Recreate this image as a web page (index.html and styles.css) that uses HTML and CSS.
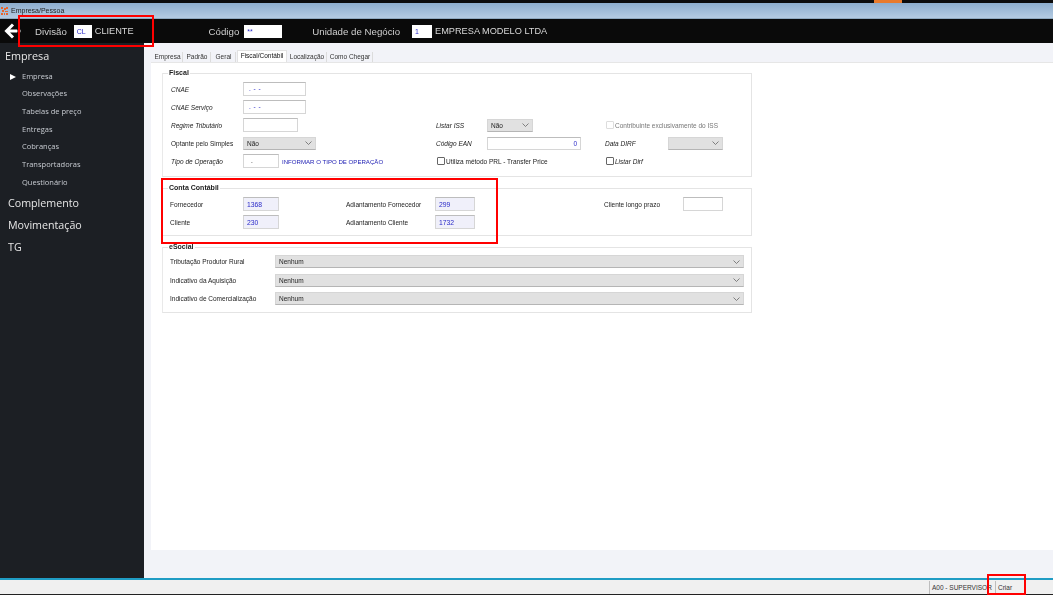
FILE: index.html
```html
<!DOCTYPE html>
<html lang="pt-BR">
<head>
<meta charset="utf-8">
<title>Empresa/Pessoa</title>
<link rel="stylesheet" href="styles.css">
</head>
<body>
<div class="app">
  <div class="strip"><span class="strip-mark"></span></div>
  <div class="titlebar">
    <svg class="app-icon" width="7" height="8" viewBox="0 0 7 8"><path d="M0 0h2v2H0zM3 1h2v2H3zM5 0h2v2H5zM1 3h2v2H1zM4 4h3v1H4zM0 6h2v2H0zM3 6h1v2H3zM5 6h2v2H5z" fill="#e8642c"/></svg>
    <span>Empresa/Pessoa</span>
  </div>
  <header class="topbar">
    <svg class="back" width="18" height="16" viewBox="0 0 18 16"><path d="M9 1.500 2.500 8 9 14.500M3 8h10" fill="none" stroke="#fff" stroke-width="3"/><path d="M13 8h4" stroke="#777" stroke-width="2.500"/></svg>
    <span class="top-label lbl-div">Divisão</span>
    <span class="top-input ti-div">CL</span>
    <span class="top-text">CLIENTE</span>
    <span class="top-label lbl-cod">Código</span>
    <span class="top-input ti-cod">**</span>
    <span class="top-label lbl-un">Unidade de Negócio</span>
    <span class="top-input ti-un">1</span>
    <span class="top-text">EMPRESA MODELO LTDA</span>
  </header>
  <div class="body">
    <nav class="side">
      <div class="side-head">Empresa</div>
      <ul class="side-list">
        <li class="active">Empresa</li>
        <li>Observações</li>
        <li>Tabelas de preço</li>
        <li>Entregas</li>
        <li>Cobranças</li>
        <li>Transportadoras</li>
        <li>Questionário</li>
      </ul>
      <div class="side-sec">Complemento</div>
      <div class="side-sec">Movimentação</div>
      <div class="side-sec">TG</div>
    </nav>
    <main class="content">
      <div class="tabs">
        <span class="tab t1">Empresa</span>
        <span class="tab t2">Padrão</span>
        <span class="tab t3">Geral</span>
        <span class="tab tab-on">Fiscal/Contábil</span>
        <span class="tab t5">Localização</span>
        <span class="tab t6">Como Chegar</span>
      </div>
      <section class="card">
        <fieldset class="panel fiscal">
          <legend>Fiscal</legend>
          <div class="grid-fiscal">
            <span class="lab it c1 r1">CNAE</span>
            <span class="fld w63 c2 r1 mask">. - -</span>
            <span class="lab it c1 r2">CNAE Serviço</span>
            <span class="fld w63 c2 r2 mask">. - -</span>
            <span class="lab it c1 r3">Regime Tributário</span>
            <span class="fld w55 c2 r3"></span>
            <span class="lab it c3 r3">Listar ISS</span>
            <span class="sel w46 c4 r3">Não<svg class="chev" width="7" height="4" viewBox="0 0 7 4"><path d="M.5.5 3.500 3.500 6.500.5"/></svg></span>
            <span class="chk-row c5 r3 dim"><i class="chk chk-off"></i>Contribuinte exclusivamente do ISS</span>
            <span class="lab c1 r4">Optante pelo Simples</span>
            <span class="sel w73 c2 r4">Não<svg class="chev" width="7" height="4" viewBox="0 0 7 4"><path d="M.5.5 3.500 3.500 6.500.5"/></svg></span>
            <span class="lab it c3 r4">Código EAN</span>
            <span class="fld w94 c4 r4 right">0</span>
            <span class="lab it c5 r4">Data DIRF</span>
            <span class="sel w55 c6 r4"><svg class="chev" width="7" height="4" viewBox="0 0 7 4"><path d="M.5.5 3.500 3.500 6.500.5"/></svg></span>
            <span class="lab it c1 r5">Tipo de Operação</span>
            <span class="tipo c2 r5"><span class="fld w36 plain">.</span><span class="link">INFORMAR O TIPO DE OPERAÇÃO</span></span>
            <span class="chk-row c3 r5 span2"><i class="chk"></i>Utiliza método PRL - Transfer Price</span>
            <span class="chk-row c5 r5 it"><i class="chk"></i>Listar Dirf</span>
          </div>
        </fieldset>
        <fieldset class="panel conta">
          <legend>Conta Contábil</legend>
          <div class="grid-conta">
            <span class="lab">Fornecedor</span>
            <span class="fld w36 ro">1368</span>
            <span class="lab">Adiantamento Fornecedor</span>
            <span class="fld w40 ro">299</span>
            <span class="lab">Cliente longo prazo</span>
            <span class="fld w40"></span>
            <span class="lab">Cliente</span>
            <span class="fld w36 ro">230</span>
            <span class="lab">Adiantamento Cliente</span>
            <span class="fld w40 ro">1732</span>
          </div>
        </fieldset>
        <fieldset class="panel esocial">
          <legend>eSocial</legend>
          <div class="grid-esocial">
            <span class="lab">Tributação Produtor Rural</span>
            <span class="sel">Nenhum<svg class="chev" width="7" height="4" viewBox="0 0 7 4"><path d="M.5.5 3.500 3.500 6.500.5"/></svg></span>
            <span class="lab">Indicativo da Aquisição</span>
            <span class="sel">Nenhum<svg class="chev" width="7" height="4" viewBox="0 0 7 4"><path d="M.5.5 3.500 3.500 6.500.5"/></svg></span>
            <span class="lab">Indicativo de Comercialização</span>
            <span class="sel">Nenhum<svg class="chev" width="7" height="4" viewBox="0 0 7 4"><path d="M.5.5 3.500 3.500 6.500.5"/></svg></span>
          </div>
        </fieldset>
      </section>
    </main>
  </div>
  <footer class="status">
    <span class="cell cell-user">A00 - SUPERVISOR</span>
    <span class="cell cell-mode">Criar</span>
  </footer>
  <div class="mark m1"></div>
  <div class="mark m2"></div>
  <div class="mark m3"></div>
</div>
</body>
</html>
```
FILE: styles.css
```css
* { box-sizing: border-box; }
html, body { margin: 0; padding: 0; }
body { font-family: "Open Sans", "Liberation Sans", sans-serif; background: #fff; overflow: hidden; }
.app { position: relative; width: 1053px; height: 595px; display: flex; flex-direction: column; }

.strip { height: 3px; flex: none; background: #0c0c0c; padding-left: 874px; display: flex; }
.strip-mark { width: 28px; background: #e87a2c; }
.titlebar { height: 16px; flex: none; background: linear-gradient(#8dadcd, #b4cbe2); border-bottom: 1px solid #8fa9c0; display: flex; align-items: center; gap: 3px; padding-left: 1px; font: 7px "Liberation Sans", sans-serif; color: #222; filter: blur(.3px); }

.topbar { height: 24px; flex: none; background: #0a0a0a; display: flex; align-items: center; color: #d8d8d8; font-family: "Liberation Sans", sans-serif; font-size: 9.200px; line-height: 13px; padding-left: 4px; filter: blur(.3px); }
.back { flex: none; }
.top-label { color: #cfcfcf; font-size: 9.700px; white-space: nowrap; }
.lbl-div { margin-left: 13px; }
.lbl-cod { margin-left: 75px; }
.lbl-un { margin-left: 30px; }
.top-input { height: 13px; background: #fff; color: #2a2ac8; font-size: 7px; line-height: 13px; padding-left: 3px; flex: none; }
.ti-div { width: 18px; margin-left: 7px; }
.ti-cod { width: 38px; margin-left: 5px; }
.ti-un { width: 20px; margin-left: 12px; }
.top-text { margin-left: 3px; white-space: nowrap; }

.body { flex: 1; display: flex; min-height: 0; filter: blur(.3px); }
.side { width: 144px; flex: none; background: #1c1f24; color: #e6e6e6; padding-top: 4px; }
.side-head { font-size: 10.800px; line-height: 18px; padding-left: 5px; }
.side-list { list-style: none; margin: 2.500px 0 0; padding: 0 0 0 22px; font-size: 7.500px; color: #c8ccd2; }
.side-list li { height: 17.700px; line-height: 17.700px; position: relative; }
.side-list .active::before { content: ""; position: absolute; left: -12px; top: 6px; border-left: 6px solid #fff; border-top: 3px solid transparent; border-bottom: 3px solid transparent; }
.side-list + .side-sec { margin-top: 1px; }
.side-sec { font-size: 10.700px; line-height: 22px; padding-left: 8px; }

.content { flex: 1; min-width: 0; background: #f2f3f8; display: flex; flex-direction: column; padding: 8px 0 28px 7px; }
.tabs { height: 12px; flex: none; display: flex; align-items: flex-end; font: 6.500px "Liberation Sans", sans-serif; color: #333; padding-left: 2px; gap: 1px; }
.tab { height: 11px; line-height: 10px; text-align: center; border-right: 1px solid #dcdcdc; background: #f2f3f8; }
.t1 { width: 30px; } .t2 { width: 27px; } .t3 { width: 24px; }
.tab-on { width: 50px; height: 13px; background: #fff; line-height: 10px; color: #111; border: 1px solid #e2e2e2; border-bottom: 0; }
.t5 { width: 39px; } .t6 { width: 45px; }
.card { flex: 1; background: #fff; padding: 6px 0 0 11px; border-top: 1px solid #e6e6e6; margin-top: -1px; }

.panel { width: 590px; margin: 0; padding: 5px 8px 8px 8px; border: 1px solid #e4e4e4; border-left-color: #e9e9e9; min-width: 0; }
.panel legend { font: bold 7px/8px "Liberation Sans", sans-serif; color: #222; padding: 0 1px; margin-left: -3px; }
.conta { margin-top: 7px; padding-bottom: 6px; padding-left: 7px; }
.conta legend, .esocial legend { margin-left: -2px; }
.esocial { margin-top: 7px; padding-top: 4px; padding-bottom: 7px; padding-left: 7px; }

.grid-fiscal { display: grid; grid-template-columns: 72px 193px 51px 118px 63px 1fr; grid-template-rows: repeat(5, 14px); row-gap: 4px; align-items: center; }
.c1 { grid-column: 1; } .c2 { grid-column: 2; } .c3 { grid-column: 3; } .c4 { grid-column: 4; } .c5 { grid-column: 5; } .c6 { grid-column: 6; }
.r1 { grid-row: 1; } .r2 { grid-row: 2; } .r3 { grid-row: 3; } .r4 { grid-row: 4; } .r5 { grid-row: 5; }
.span2 { grid-column-end: span 2; }
.grid-conta { display: grid; grid-template-columns: 73px 103px 89px 169px 79px 40px; grid-template-rows: 14px 14px; row-gap: 4px; align-items: center; }
.grid-esocial { display: grid; grid-template-columns: 105px 469px; grid-template-rows: repeat(3, 13px); row-gap: 5.500px; align-items: center; }

.lab, .chk-row, .tipo, .fld, .sel { font: 6.500px "Liberation Sans", sans-serif; color: #222; white-space: nowrap; }
.it { font-style: italic; }
.fld { display: block; height: 14px; line-height: 12px; background: #fff; border: 1px solid #d6d6d6; border-top-color: #bdbdbd; padding: 0 3px; color: #2a2ac8; }
.mask { padding-left: 5px; letter-spacing: .5px; }
.plain { flex: none; padding-left: 7px; color: #111; }
.ro { background: #f0f0fa; color: #2a2ac8; font-size: 6.800px; line-height: 14px; }
.right { text-align: right; height: 13px; }
.w36 { width: 36px; } .w40 { width: 40px; } .w55 { width: 55px; } .w63 { width: 63px; } .w94 { width: 94px; }
.sel { height: 13px; display: flex; align-items: center; justify-content: space-between; background: #e1e1e1; border: 1px solid #d6d6d6; border-bottom-color: #b5b5b5; padding: 0 3px; color: #222; }
.sel.w46 { width: 46px; } .sel.w55 { width: 55px; justify-content: flex-end; } .sel.w73 { width: 73px; }
.chev { flex: none; }
.chev path { fill: none; stroke: #666; stroke-width: .8; }
.tipo { display: flex; align-items: center; gap: 3px; }
.link { color: #2323b5; font-size: 6.100px; }
.chk-row { display: flex; align-items: center; gap: 1px; margin-left: 1px; }
.chk { width: 8px; height: 8px; flex: none; border: 1px solid #666; background: #fff; border-radius: 1px; }
.chk-off { border-color: #ddd; }
.dim { color: #777; }

.status { height: 17px; flex: none; background: #f0f0f0; border-top: 2px solid #1f9cc4; border-bottom: 1px solid #222; display: flex; justify-content: flex-end; font: 6.500px "Liberation Sans", sans-serif; color: #333; }
.cell { border-left: 1px solid #bdbdbd; padding-left: 2px; line-height: 14px; margin-top: 1px; white-space: nowrap; }
.cell-user { width: 66px; }
.cell-mode { width: 58px; }

.mark { position: absolute; border: 2px solid #ff0000; pointer-events: none; }
.m1 { left: 18px; top: 15px; width: 136px; height: 32px; }
.m2 { left: 161px; top: 178px; width: 337px; height: 66px; }
.m3 { left: 987px; top: 574px; width: 39px; height: 21px; }
```
